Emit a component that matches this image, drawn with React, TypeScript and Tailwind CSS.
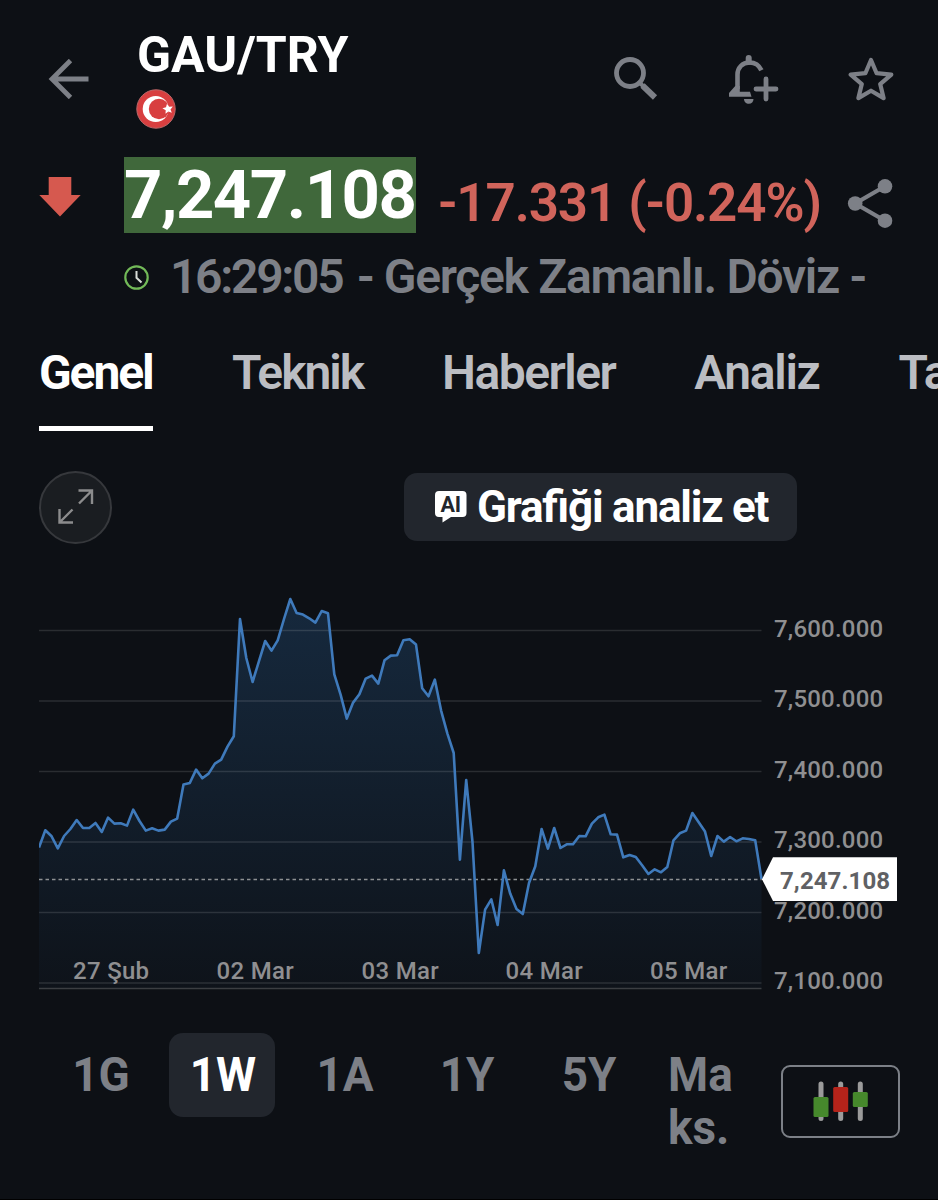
import { useState } from "react"
import clsx from "clsx"

const TABS = [
  { label: "Genel", cls: "tracking-[-2.1px]" },
  { label: "Teknik", cls: "tracking-[-2px]" },
  { label: "Haberler", cls: "tracking-[-1.55px]" },
  { label: "Analiz", cls: "tracking-[-1.3px]" },
  { label: "Ta", cls: "tracking-[-1.1px]" }
]

const RANGES = ["1G", "1W", "1A", "1Y", "5Y", "Maks."]

const DATES = [
  { label: "27 Şub", x: 34 },
  { label: "02 Mar", x: 177.5 },
  { label: "03 Mar", x: 322.5 },
  { label: "04 Mar", x: 466.5 },
  { label: "05 Mar", x: 611 }
]

const GRID = [
  { label: "7,600.000", y: 40.5 },
  { label: "7,500.000", y: 111 },
  { label: "7,400.000", y: 181.5 },
  { label: "7,300.000", y: 252 },
  { label: "7,200.000", y: 322.5 },
  { label: "7,100.000", y: 393 }
]

// distance from the top of the plot, in thirds of a pixel
const SERIES = [
  772, 720, 738, 774, 737, 716, 689, 713, 713, 698, 725, 682, 700, 699, 706, 658, 692, 721, 714, 721,
  718, 694, 685, 583, 578, 538, 564, 550, 520, 508, 469, 438, 86, 203, 275, 213, 152, 181, 150, 86,
  26, 68, 73, 84, 97, 62, 69, 252, 313, 385, 337, 312, 265, 256, 280, 210, 196, 195, 150, 147,
  163, 294, 318, 268, 361, 430, 488, 808, 569, 755, 1088, 958, 927, 1004, 840, 910, 956, 971, 878, 828,
  716, 775, 713, 773, 762, 762, 737, 738, 700, 681, 673, 732, 733, 801, 794, 800, 825, 851, 837, 846,
  830, 750, 729, 721, 668, 696, 724, 797, 737, 754, 740, 753, 744, 746, 750, 866
]

const PLOT_W = 722.5
const step = PLOT_W / (SERIES.length - 1)
const points = SERIES.map((v, i) => `${(i * step).toFixed(1)},${(v / 3 + 0.3).toFixed(1)}`).join(" ")

function Flag() {
  return (
    <svg width="40" height="40" viewBox="0 0 40 40">
      <circle cx="20" cy="20" r="19.2" fill="#d83f40" stroke="#b9696a" strokeWidth="1" />
      <circle cx="19.7" cy="20" r="13" fill="#fff" />
      <circle cx="23" cy="20" r="10.2" fill="#d83f40" />
      <path d="M26.4 19.2l3.6-.9 1-3.6 2.1 3.1 3.7-.3-2.3 2.9 1.3 3.4-3.4-1.2-2.900 2.200.2-3.600z" fill="#fff" />
    </svg>
  )
}

function Header() {
  return (
    <header className="mb-[30px] flex h-[127px] pt-[30px] pr-[44px] pl-12 text-[#7d8087]">
      <svg className="mt-[29px]" width="42" height="40" viewBox="0 0 42 40" fill="none" stroke="currentColor" strokeWidth="4.8">
        <path d="M40.5 20H4M22.5 1.5L4 20l18.5 18.5" />
      </svg>
      <div className="ml-[47px]">
        <h1 className="text-[50px] leading-[50px] font-bold text-white">GAU/TRY</h1>
        <div className="mt-[9px] -ml-px">
          <Flag />
        </div>
      </div>
      <div className="mt-[23px] ml-auto flex gap-[68px]">
        <svg width="48" height="52" viewBox="0 0 48 52" fill="none" stroke="currentColor">
          <circle cx="18" cy="20" r="13.5" strokeWidth="4.8" />
          <path d="M27.5 29.5l3.5 3.5" strokeWidth="4" />
          <path d="M30.5 32.5l12.5 12" strokeWidth="6" />
        </svg>
        <svg width="52" height="52" viewBox="0 0 52 52" fill="none" stroke="currentColor" strokeWidth="4.6">
          <path d="M33.4 17.3C31.3 12.7 27 9.5 21.500 9.500c-7.200 0-12 5.300-12 12v14.500" />
          <path d="M20.7 5v4" strokeWidth="6" strokeLinecap="round" />
          <path d="M7.2 33L1 40v3.8h22.500l-1.500-5H11.800V33z" fill="currentColor" stroke="none" />
          <path d="M16 46h9.500c0 2.900-2 4.800-4.700 4.800S16 48.900 16 46z" fill="currentColor" stroke="none" />
          <path d="M38 26v20M28 36h20" strokeLinecap="round" strokeWidth="4.8" />
        </svg>
        <svg width="46" height="52" viewBox="0 0 46 52" fill="none" stroke="currentColor" strokeWidth="4.2" strokeLinejoin="round">
          <path d="M23 7l5.600 13.200 14.700 1.400-11.100 9.500 3.400 14L23 37.700 10.400 45.100l3.400-14L2.700 21.600l14.700-1.400z" />
        </svg>
      </div>
    </header>
  )
}

function Quote() {
  return (
    <section>
      <div className="flex h-[76px] pl-[39px]">
        <svg className="mt-5" width="42" height="40" viewBox="0 0 42 40">
          <path d="M9.700 0h22.600v18h9.400L21 39.500.3 18h9.400z" fill="#d6594f" />
        </svg>
        <span className="ml-[43px] w-[292px] bg-[#40683b] pt-px text-[67px] leading-[75px] font-bold tracking-[-1.5px] whitespace-nowrap text-white">
          7,247.108
        </span>
        <span className="mt-2 ml-[22px] text-[53px] leading-[76px] font-semibold tracking-[-1.1px] whitespace-nowrap text-[#d1645b]">
          -17.331 (-0.24%)
        </span>
        <svg className="mt-[20px] mr-[44px] ml-auto shrink-0" width="48" height="54" viewBox="0 0 48 54" fill="#7d8087">
          <path d="M39 9.300L9.200 26.500 39 43.700" fill="none" stroke="#7d8087" strokeWidth="4.200" />
          <circle cx="9.200" cy="26.500" r="7.300" />
          <circle cx="39" cy="9.300" r="7.300" />
          <circle cx="39" cy="43.700" r="7.300" />
        </svg>
      </div>
      <div className="mt-3.5 flex h-[59px] pl-[124px] text-[48px] leading-[60px] font-semibold text-[#7d8087]">
        <svg className="mt-[18px]" width="25" height="25" viewBox="0 0 25 25" fill="none">
          <circle cx="12.500" cy="12.500" r="11.200" stroke="#72b958" strokeWidth="2.200" />
          <path d="M12.500 6v6.700l5 4.800" stroke="#d9dcd9" strokeWidth="2" />
        </svg>
        <span className="ml-[21px] tracking-[-2.3px]">16:29:05</span>
        <span className="ml-1 tracking-[-1.3px] whitespace-pre"> - Gerçek Zamanlı. Döviz -</span>
      </div>
    </section>
  )
}

function Tabs() {
  const [active, setActive] = useState("Genel")

  return (
    <nav className="mt-[37px] flex h-[88px] gap-[79px] overflow-hidden pl-[39px]">
      {TABS.map(tab => (
        <button
          key={tab.label}
          onClick={() => setActive(tab.label)}
          className={clsx(
            "flex shrink-0 items-start text-[48px] leading-[60px] whitespace-nowrap",
            tab.cls,
            active === tab.label ? "w-[114px] border-b-[5px] border-white font-bold text-white" : "font-semibold text-[#bbbdc2]"
          )}
        >
          {tab.label}
        </button>
      ))}
    </nav>
  )
}

function Toolbar() {
  return (
    <div className="mt-[39.5px] flex h-[73px] items-center pl-[39px]">
      <button className="flex size-[73px] items-center justify-center rounded-full border-2 border-[#36383c] bg-[#1a1d21]">
        <svg width="38" height="38" viewBox="0 0 38 38" fill="none" stroke="#8c8c8d" strokeWidth="2.400">
          <path d="M21.500 2.500h13.500v13.500M35 2.500L22 15.500M2.500 21v13.500h13.500M2.500 34.500l13-13" />
        </svg>
      </button>
      <button className="ml-[292px] flex h-[68px] w-[393px] items-center rounded-[13px] bg-[#22262d] pl-[31px]">
        <svg width="32" height="32" viewBox="0 0 32 32">
          <path d="M4 0h23.500a4 4 0 0 1 4 4v18a4 4 0 0 1-4 4H16l-8.500 5.500V26H4a4 4 0 0 1-4-4V4a4 4 0 0 1 4-4z" fill="#fff" />
          <text x="15.800" y="20.500" fontSize="21.500" fontWeight="700" textAnchor="middle" fill="#22262d">AI</text>
        </svg>
        <span className="ml-2.5 text-[44px] leading-[60px] font-bold tracking-[-1.2px] whitespace-nowrap text-white [font-feature-settings:'liga'_1]">
          Grafiği analiz et
        </span>
      </button>
    </div>
  )
}

function Chart() {
  return (
    <svg className="mt-[46.5px] ml-[39px] shrink-0" width="899" height="410" viewBox="0 0 899 410">
      <defs>
        <linearGradient id="area" x1="0" y1="0" x2="0" y2="1">
          <stop offset="0" stopColor="#3278be" stopOpacity="0.24" />
          <stop offset="1" stopColor="#3278be" stopOpacity="0.03" />
        </linearGradient>
      </defs>
      <polygon points={`0,398 ${points} ${PLOT_W},398`} fill="url(#area)" />
      {GRID.map(row => (
        <g key={row.label}>
          <line x1="0" x2={PLOT_W} y1={row.y} y2={row.y} stroke="#fff" strokeOpacity="0.12" strokeWidth="1.300" />
          <text x="735" y={row.y + 6.4} fontSize="24" fontWeight="500" letterSpacing="0.2" fill="#8f8f91">{row.label}</text>
        </g>
      ))}
      <line x1="0" x2={PLOT_W} y1="398.500" y2="398.500" stroke="#3b3e42" strokeWidth="1.300" />
      <line x1="0" x2={PLOT_W} y1="289.500" y2="289.500" stroke="#8d9092" strokeWidth="1.300" strokeDasharray="3.500 3" />
      <polyline points={points} fill="none" stroke="#3f7abb" strokeWidth="2.600" strokeLinejoin="round" />
      {DATES.map(d => (
        <text key={d.label} x={d.x} y="389" fontSize="24" fontWeight="500" letterSpacing="0.3" fill="#8f8f91">{d.label}</text>
      ))}

      {/* last price */}
      <path d="M723 289.300L734 267.300H858V311H734z" fill="#fff" />
      <text x="741" y="299" fontSize="24" fontWeight="700" letterSpacing="0.1" fill="#606164">7,247.108</text>
    </svg>
  )
}

function RangeBar() {
  const [range, setRange] = useState("1W")

  return (
    <div className="mt-[33px] flex items-start pl-[47px]">
      <div className="flex items-start gap-4">
        {RANGES.map(r => (
          <button
            key={r}
            onClick={() => setRange(r)}
            className={clsx(
              "w-[106px] rounded-[14px] pt-[15px] pb-4 text-[48px] leading-[53px] font-bold",
              r === "Maks." ? "pr-6 pl-[11px] text-left break-all" : "pl-[2px] text-center",
              range === r ? "bg-[#22262d] text-white" : "text-[#7d8087]"
            )}
          >
            <span className={clsx("block scale-x-[0.955]", r === "Maks." && "origin-left")}>{r}</span>
          </button>
        ))}
      </div>
      <button className="mt-8 ml-[18px] flex h-[73px] w-[119px] items-center justify-center rounded-[9px] border-[2.5px] border-[#7c8087]">
        <svg className="-mt-0.5" width="56" height="42" viewBox="0 0 56 42" fill="none" stroke="#9b9b9b" strokeWidth="5" strokeLinecap="round">
          <path d="M8 4v34.500M27.700 4v34.500M47.300 4v34.500" />
          <g stroke="none">
            <rect x=".5" y="17" width="15" height="20" rx="1.500" fill="#46892c" />
            <rect x="20.200" y="7" width="15" height="25" rx="1.500" fill="#b4231a" />
            <rect x="39.800" y="12" width="15" height="15" rx="1.500" fill="#46892c" />
          </g>
        </svg>
      </button>
    </div>
  )
}

export default function App() {
  return (
    <div className="flex h-[1200px] w-[938px] flex-col overflow-hidden border-b border-black bg-[#0d1015] font-[Roboto,sans-serif]">
      <Header />
      <Quote />
      <Tabs />
      <Toolbar />
      <Chart />
      <RangeBar />
    </div>
  )
}
